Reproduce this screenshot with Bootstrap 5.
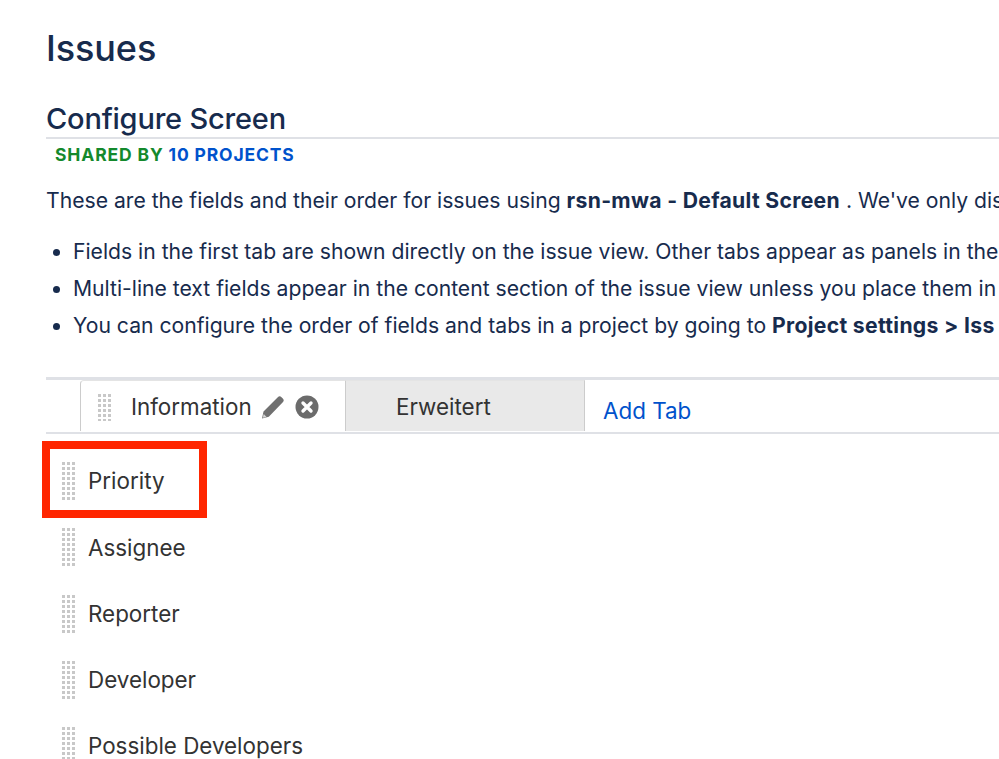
<!DOCTYPE html>
<html lang="en">
<head>
  <meta charset="UTF-8">
  <title>Configure Screen</title>
  <link rel="stylesheet" href="https://cdn.jsdelivr.net/npm/bootstrap@5.3.3/dist/css/bootstrap.min.css">
  <style>
    html, body { height: 100%; overflow: hidden; }
    body {
      font-family: Inter, Roboto, sans-serif;
      color: #172b4d;
      background: #fff;
      padding: 26px 0 0 46px;
      width: 1400px;
    }
    .page-title { font-size: 36px; font-weight: 500; line-height: 44px; letter-spacing: -0.1px; margin: 0 0 31px; color: #172b4d; }
    .sub-title { font-size: 29px; font-weight: 500; line-height: 36px; letter-spacing: -0.2px; margin: 0; border-bottom: 2px solid #dfe1e6; color: #172b4d; }
    .shared-by { font-size: 17.5px; font-weight: 700; line-height: 22px; margin: 5px 0 21px 9px; letter-spacing: .85px; color: #14892c; }
    .shared-by a { color: #0052cc; text-decoration: none; }
    .intro { font-size: 21.15px; line-height: 28px; margin: 0 0 18px; white-space: nowrap; }
    .notes { font-size: 21.15px; line-height: 37px; padding-left: 27px; margin: 0 0 33px; white-space: nowrap; }
    .intro b, .notes b { letter-spacing: .32px; }
    .tab-strip { border-top: 3px solid #dfe1e6; border-bottom: 2px solid #dfe1e6; height: 57px; padding-left: 34px; }
    .tab-item { height: 51px; font-size: 22.4px; color: #333; border-right: 1px solid #ccc; border-top: 1px solid #e4e4e4; padding-top: 2px; }
    .tab-on { width: 266px; background: #fff; border-left: 1px solid #ccc; border-top-left-radius: 4px; padding-left: 16px; }
    .tab-off { width: 239px; background: #e9e9e9; padding-left: 50px; }
    .tab-add { font-size: 22.4px; color: #0052cc; text-decoration: none; margin: 15px 0 0 18px; line-height: 32px; }
    .grip {
      width: 15px;
      background-image: radial-gradient(circle, #c8c8c8 1.6px, transparent 1.9px);
      background-size: 5px 5px;
      flex: none;
    }
    .tab-on .grip { height: 28px; margin-right: 19px; }
    .tab-pencil { margin-left: 9px; }
    .tab-close { margin-left: 10px; }
    .field-row { height: 66.25px; font-size: 22.4px; color: #333; padding-left: 15px; gap: 12px; }
    .field-row .grip { height: 40px; }
    .field-list { margin-top: 14px; }
    .red-box { position: absolute; left: 42px; top: 441px; width: 165px; height: 77px; border: 8px solid #ff2600; }
  </style>
</head>
<body>
  <h1 class="page-title">Issues</h1>
  <h2 class="sub-title">Configure Screen</h2>
  <div class="shared-by">SHARED BY <a href="#">10 PROJECTS</a></div>
  <p class="intro">These are the fields and their order for issues using <b>rsn-mwa - Default Screen</b> . We've only dis</p>
  <ul class="notes">
    <li>Fields in the first tab are shown directly on the issue view. Other tabs appear as panels in the</li>
    <li>Multi-line text fields appear in the content section of the issue view unless you place them in</li>
    <li>You can configure the order of fields and tabs in a project by going to <b>Project settings &gt; Iss</b></li>
  </ul>

  <div class="tab-strip d-flex align-items-start">
    <div class="tab-item tab-on d-flex align-items-center">
      <span class="grip"></span>
      <span>Information</span>
      <svg class="tab-pencil" width="24" height="24" viewBox="0 0 24 24"><path fill="#707070" d="M1 23.500l1.500-7L16.800 2.300a2.600 2.600 0 0 1 3.700 0l1.300 1.300a2.600 2.600 0 0 1 0 3.700L7.800 21.800z"/><path fill="#fff" d="M1.800 22.800l.9-3.800 2.900 2.900z" opacity=".7"/></svg>
      <svg class="tab-close" width="24" height="24" viewBox="0 0 24 24"><circle cx="12" cy="12" r="11.500" fill="#6b6b6b"/><path d="M8 8l8 8M16 8l-8 8" stroke="#fff" stroke-width="3.400" stroke-linecap="round"/></svg>
    </div>
    <div class="tab-item tab-off d-flex align-items-center">Erweitert</div>
    <a class="tab-add" href="#">Add Tab</a>
  </div>

  <div class="field-list">
    <div class="field-row d-flex align-items-center"><span class="grip"></span><span>Priority</span></div>
    <div class="field-row d-flex align-items-center"><span class="grip"></span><span>Assignee</span></div>
    <div class="field-row d-flex align-items-center"><span class="grip"></span><span>Reporter</span></div>
    <div class="field-row d-flex align-items-center"><span class="grip"></span><span>Developer</span></div>
    <div class="field-row d-flex align-items-center"><span class="grip"></span><span>Possible Developers</span></div>
  </div>

  <div class="red-box"></div>

  <script src="https://cdn.jsdelivr.net/npm/bootstrap@5.3.3/dist/js/bootstrap.bundle.min.js"></script>
</body>
</html>
